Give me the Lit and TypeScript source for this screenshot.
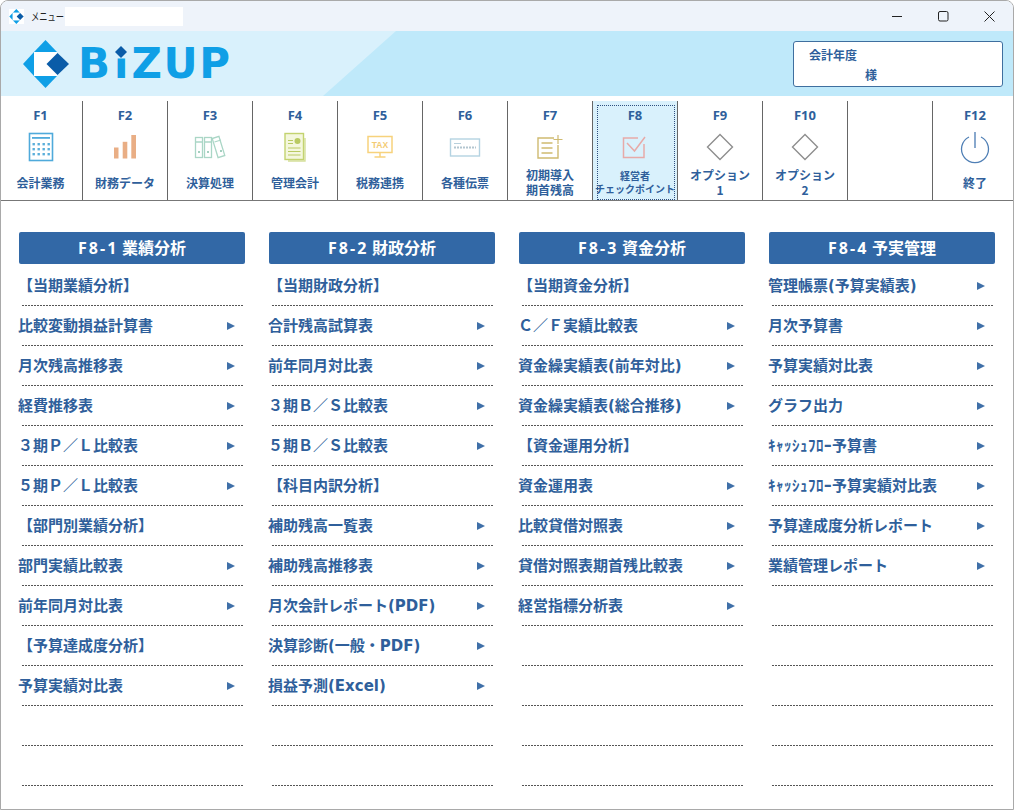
import { LitElement, html, css, svg } from "lit";
import { customElement } from "lit/decorators.js";

const ICONS: Record<string, unknown> = {
  calc: svg`<rect x="4.500" y="2.500" width="23" height="27" fill="#fff" stroke="#4faadb" stroke-width="1.600"/><rect x="7" y="6" width="18" height="1.800" fill="#4faadb"/>
    ${[12, 17, 22].map((y) => [8, 13, 18, 23].map((x) => svg`<rect x="${x - 0.5}" y="${y}" width="2.400" height="2.400" fill="#5aafdb"/>`))}`,
  bars: svg`<g fill="#e9ae85"><rect x="5" y="16.500" width="4.500" height="11"/><rect x="13.700" y="10.800" width="4.600" height="16.700"/><rect x="22.300" y="4" width="4.700" height="23.500"/></g>`,
  books: svg`<g fill="none" stroke="#aad6c6" stroke-width="1.300"><rect x="1.500" y="6.500" width="7" height="20"/><rect x="10.500" y="6.500" width="7" height="20"/><rect x="21" y="6" width="7" height="20" transform="rotate(-17 24.500 16)"/><path d="M1.500 11h7M10.500 11h7M20.500 11l6.500-2"/></g>
    <g fill="#a4cfbf"><rect x="4" y="20" width="2" height="2"/><rect x="13" y="20" width="2" height="2"/><rect x="26" y="19" width="2" height="2"/></g>`,
  report: svg`<path d="M9 30h17V7" fill="none" stroke="#d5e09a" stroke-width="1.400"/><rect x="6" y="2.500" width="18.500" height="26" fill="#f4f7dd" stroke="#c3d36f" stroke-width="1.400"/>
    <path d="M9 9.500h5M9 12.500h5M9 17h12.500M9 20.500h12.500M9 24h12.500" stroke="#b9ca62" stroke-width="1.200"/><circle cx="18.500" cy="10" r="3" fill="#b9ca62"/>`,
  tax: svg`<rect x="4" y="5.500" width="24" height="16" fill="#fff" stroke="#f7d27c" stroke-width="1.500"/><text x="16" y="17" text-anchor="middle" font-family="'Liberation Sans',sans-serif" font-size="8.500" font-weight="700" fill="#f3cb73">TAX</text><path d="M16 22v3.500M10.500 26h11" stroke="#f7d27c" stroke-width="1.500"/>`,
  slip: svg`<rect x="1.500" y="8" width="29" height="17" fill="#fff" stroke="#b4d3e2" stroke-width="1.400"/><path d="M5 12.500h7" stroke="#b8d0dc"/><path d="M5 16.500h22" stroke="#b3c6d0" stroke-width="2.200" stroke-dasharray="2 1"/>`,
  initial: svg`<path d="M20 7H4v20h20V14" fill="none" stroke="#cfba70" stroke-width="1.400"/><path d="M7.500 12h11M7.500 17h11M7.500 22h11" stroke="#cfba70" stroke-width="1.400"/><path d="M24 4v9M19.500 8.500h9" stroke="#cfba70" stroke-width="1.200"/>`,
  check: svg`<path d="M19 7H4.500V26.500H25V13" fill="none" stroke="#e7aaa8" stroke-width="1.500"/><path d="M8 12l7.500 8L26 6" fill="none" stroke="#e7aaa8" stroke-width="1.500"/>`,
  diamond: svg`<path d="M16 3.500L28.500 16 16 28.500 3.500 16z" fill="none" stroke="#8e8e8e" stroke-width="1.400"/>`,
  power: svg`<path d="M10 6a13.500 13.500 0 1 0 12 0" fill="none" stroke="#4f7fb5" stroke-width="1.300"/><path d="M16 1v16" stroke="#6b93c1" stroke-width="1.600"/>`,
};

const TOOLS = [
  { key: "F1", icon: "calc", label: ["会計業務"] },
  { key: "F2", icon: "bars", label: ["財務データ"] },
  { key: "F3", icon: "books", label: ["決算処理"] },
  { key: "F4", icon: "report", label: ["管理会計"] },
  { key: "F5", icon: "tax", label: ["税務連携"] },
  { key: "F6", icon: "slip", label: ["各種伝票"] },
  { key: "F7", icon: "initial", label: ["初期導入", "期首残高"] },
  { key: "F8", icon: "check", label: ["経営者", "チェックポイント"], active: true },
  { key: "F9", icon: "diamond", label: ["オプション", "1"] },
  { key: "F10", icon: "diamond", label: ["オプション", "2"] },
  { key: "", icon: "", label: [] },
  { key: "F12", icon: "power", label: ["終了"] },
];

const COLUMNS = [
  {
    key: "F8-1",
    title: "業績分析",
    rows: ["【当期業績分析】", "比較変動損益計算書", "月次残高推移表", "経費推移表", "３期Ｐ／Ｌ比較表", "５期Ｐ／Ｌ比較表", "【部門別業績分析】", "部門実績比較表", "前年同月対比表", "【予算達成度分析】", "予算実績対比表", "", ""],
  },
  {
    key: "F8-2",
    title: "財政分析",
    rows: ["【当期財政分析】", "合計残高試算表", "前年同月対比表", "３期Ｂ／Ｓ比較表", "５期Ｂ／Ｓ比較表", "【科目内訳分析】", "補助残高一覧表", "補助残高推移表", "月次会計レポート(PDF)", "決算診断(一般・PDF)", "損益予測(Excel)", "", ""],
  },
  {
    key: "F8-3",
    title: "資金分析",
    rows: ["【当期資金分析】", "Ｃ／Ｆ実績比較表", "資金繰実績表(前年対比)", "資金繰実績表(総合推移)", "【資金運用分析】", "資金運用表", "比較貸借対照表", "貸借対照表期首残比較表", "経営指標分析表", "", "", "", ""],
  },
  {
    key: "F8-4",
    title: "予実管理",
    rows: ["管理帳票(予算実績表)", "月次予算書", "予算実績対比表", "グラフ出力", "ｷｬｯｼｭﾌﾛｰ予算書", "ｷｬｯｼｭﾌﾛｰ予算実績対比表", "予算達成度分析レポート", "業績管理レポート", "", "", "", "", ""],
  },
];

const HALF = "ｷｬｯｼｭﾌﾛｰ";

const logoMark = svg`<path d="M22.500 0L34 12H11z" fill="#0f9fe6"/><path d="M0 24L11 12V36z" fill="#0f9fe6"/><path d="M22.500 48L11 36H34z" fill="#0f9fe6"/><rect x="11" y="12" width="23" height="24" fill="#fff"/><path d="M34.500 13L46 24 34.500 35 23.500 24z" fill="#0a5ca8"/>`;

@customElement("app-root")
export class AppRoot extends LitElement {
  static styles = css`
    :host {
      display: block;
      width: 1014px;
      height: 810px;
      font-family: "Noto Sans CJK JP", "Noto Sans", sans-serif;
      color: #2f5f9b;
    }
    .window {
      box-sizing: border-box;
      width: 1014px;
      height: 810px;
      display: flex;
      flex-direction: column;
      background: #fff;
      border: 1px solid #a9a9a9;
      border-radius: 8px 8px 0 0;
      overflow: hidden;
    }
    .title {
      height: 30px;
      flex: none;
      display: flex;
      align-items: center;
      background: #eef3fa;
      color: #222;
      font-size: 11px;
    }
    .title-icon {
      width: 15px;
      height: 15px;
      margin-left: 8px;
      background: #fff;
      display: block;
    }
    .title-box {
      margin-left: 7px;
      width: 34px;
      white-space: nowrap;
    }
    .title-text {
      display: inline-block;
      transform: scaleX(0.75);
      transform-origin: left center;
    }
    .redact {
      width: 118px;
      height: 19px;
      background: #fff;
    }
    .controls {
      margin-left: auto;
      display: flex;
      margin-right: 18px;
      gap: 35px;
      align-items: center;
    }
    .controls svg {
      width: 11px;
      height: 11px;
      display: block;
    }
    .banner {
      position: relative;
      height: 65px;
      flex: none;
      display: flex;
      align-items: center;
      padding-left: 22px;
      background: #d9f1fc;
      overflow: hidden;
    }
    .banner::before {
      content: "";
      position: absolute;
      inset: 0;
      background: #bfe9fa;
      clip-path: polygon(322px 65px, 395px 0, 100% 0, 100% 100%);
    }
    .logo {
      position: relative;
      display: flex;
      align-items: center;
    }
    .logo-mark {
      width: 46px;
      height: 48px;
      display: block;
    }
    .logo-text {
      margin-left: 9px;
      font-family: "DejaVu Sans", sans-serif;
      font-weight: 700;
      font-size: 42px;
      line-height: 48px;
      color: #0f9fe6;
      display: flex;
    }
    .logo-zup {
      letter-spacing: 1.6px;
    }
    .logo-i {
      position: relative;
      margin: 0 3px 0 4px;
    }
    .logo-stem {
      display: block;
      clip-path: inset(19px 0 0 0);
    }
    .logo-dot {
      position: absolute;
      left: 50%;
      top: 6px;
      width: 12px;
      height: 12px;
      margin-left: -6px;
      display: block;
    }
    .account {
      position: relative;
      margin-left: auto;
      margin-right: 10px;
      box-sizing: border-box;
      width: 210px;
      height: 46px;
      background: #fff;
      border: 1px solid #3f6f9f;
      border-radius: 3px;
      display: flex;
      flex-direction: column;
      padding: 3px 0 0 15px;
      font-size: 12px;
      font-weight: 700;
      line-height: 20px;
    }
    .account .sama {
      padding-left: 56px;
    }
    .toolbar {
      margin-top: 5px;
      height: 100px;
      flex: none;
      box-sizing: border-box;
      display: grid;
      grid-template-columns: 82px repeat(10, 85px) 1fr;
      border-bottom: 1px solid #777;
    }
    .tool {
      box-sizing: border-box;
      position: relative;
      display: flex;
      flex-direction: column;
      align-items: center;
      padding-top: 7px;
      border-right: 1px solid #666;
    }
    .tool:first-child {
      padding-right: 2px;
    }
    .tool:last-child {
      border-right: none;
      padding-left: 4px;
    }
    .tool.active {
      background: #d9f1fc;
    }
    .tool.active::before {
      content: "";
      position: absolute;
      left: 4px;
      right: 2px;
      top: 4px;
      bottom: 0;
      border: 1px dotted #2f4f7f;
    }
    .key {
      font-family: "Open Sans", "Noto Sans", sans-serif;
      font-weight: 700;
      font-size: 13px;
      line-height: 14px;
      height: 14px;
    }
    .tool-icon {
      width: 32px;
      height: 32px;
      margin-top: 9px;
      display: block;
      overflow: visible;
    }
    .tool-label {
      margin-top: 4px;
      height: 30px;
      display: flex;
      flex-direction: column;
      align-items: center;
      justify-content: center;
      font-size: 12px;
      font-weight: 700;
      line-height: 15px;
      white-space: nowrap;
    }
    .tool-label.small {
      font-size: 10px;
      line-height: 13px;
    }
    .columns {
      display: grid;
      grid-template-columns: repeat(4, 226px);
      column-gap: 24px;
      padding: 31px 0 0 18px;
    }
    .col-title {
      height: 32px;
      background: #3268a6;
      border-radius: 2px;
      color: #fff;
      font-size: 16px;
      font-weight: 700;
      line-height: 31px;
      text-align: center;
      margin-bottom: 2px;
      white-space: pre;
    }
    .col-key {
      font-family: "Open Sans", sans-serif;
      letter-spacing: 2px;
    }
    .row {
      position: relative;
      box-sizing: border-box;
      height: 40px;
      display: flex;
      align-items: center;
      justify-content: space-between;
      padding: 0 10px 0 0;
      margin-left: -1px;
      font-size: 15px;
      font-weight: 700;
      white-space: nowrap;
    }
    .row-text {
      font-family: "DejaVu Sans", "Noto Sans CJK JP", sans-serif;
      line-height: 20px;
    }
    .row-text .half {
      letter-spacing: 0.5px;
    }
    .row::after {
      content: "";
      position: absolute;
      left: 4px;
      right: 1px;
      bottom: 0;
      height: 1px;
      background-image: repeating-linear-gradient(to right, #555 0 2px, transparent 2px 3px);
    }
    .arrow {
      width: 8px;
      height: 8px;
      display: block;
    }
  `;

  private rowText(r: string) {
    if (r.startsWith(HALF)) {
      return html`<span class="half">${HALF}</span>${r.slice(HALF.length)}`;
    }
    return r;
  }

  render() {
    return html`<div class="window">
      <div class="title">
        <svg class="title-icon" viewBox="0 0 46 48">${logoMark}</svg>
        <span class="title-box"><span class="title-text">メニュー</span></span>
        <span class="redact"></span>
        <div class="controls">
          <svg viewBox="0 0 11 11"><path d="M0 5.500h10" stroke="#222" fill="none"/></svg>
          <svg viewBox="0 0 11 11"><rect x=".5" y=".5" width="9.500" height="9.500" rx="1.500" stroke="#222" fill="none"/></svg>
          <svg viewBox="0 0 11 11"><path d="M.5.500l10 10M10.500.500l-10 10" stroke="#222" fill="none"/></svg>
        </div>
      </div>
      <div class="banner">
        <div class="logo">
          <svg class="logo-mark" viewBox="0 0 46 48">${logoMark}</svg>
          <div class="logo-text">
            <span>B</span>
            <span class="logo-i">
              <span class="logo-stem">i</span>
              <svg class="logo-dot" viewBox="0 0 12 12"><path d="M6 0L12 6 6 12 0 6z" fill="#0a5ca8"/></svg>
            </span>
            <span class="logo-zup">ZUP</span>
          </div>
        </div>
        <div class="account">
          <span>会計年度</span>
          <span class="sama">様</span>
        </div>
      </div>
      <div class="toolbar">
        ${TOOLS.map(
          (t) => html`<div class="tool ${t.active ? "active" : ""}">
            ${t.key
              ? html`<span class="key">${t.key}</span>
                  <svg class="tool-icon" viewBox="0 0 32 32">${ICONS[t.icon]}</svg>
                  <div class="tool-label ${t.active ? "small" : ""}">
                    ${t.label.map((l) => html`<span>${l}</span>`)}
                  </div>`
              : ""}
          </div>`
        )}
      </div>
      <div class="columns">
        ${COLUMNS.map(
          (c) => html`<div>
            <div class="col-title"><span class="col-key">${c.key}</span> ${c.title}</div>
            ${c.rows.map(
              (r) => html`<div class="row">
                <span class="row-text">${this.rowText(r)}</span>
                ${r && !r.startsWith("【")
                  ? html`<svg class="arrow" viewBox="0 0 8 8"><path d="M0 0L8 4 0 8z" fill="#3f6fa8"/></svg>`
                  : ""}
              </div>`
            )}
          </div>`
        )}
      </div>
    </div>`;
  }
}
